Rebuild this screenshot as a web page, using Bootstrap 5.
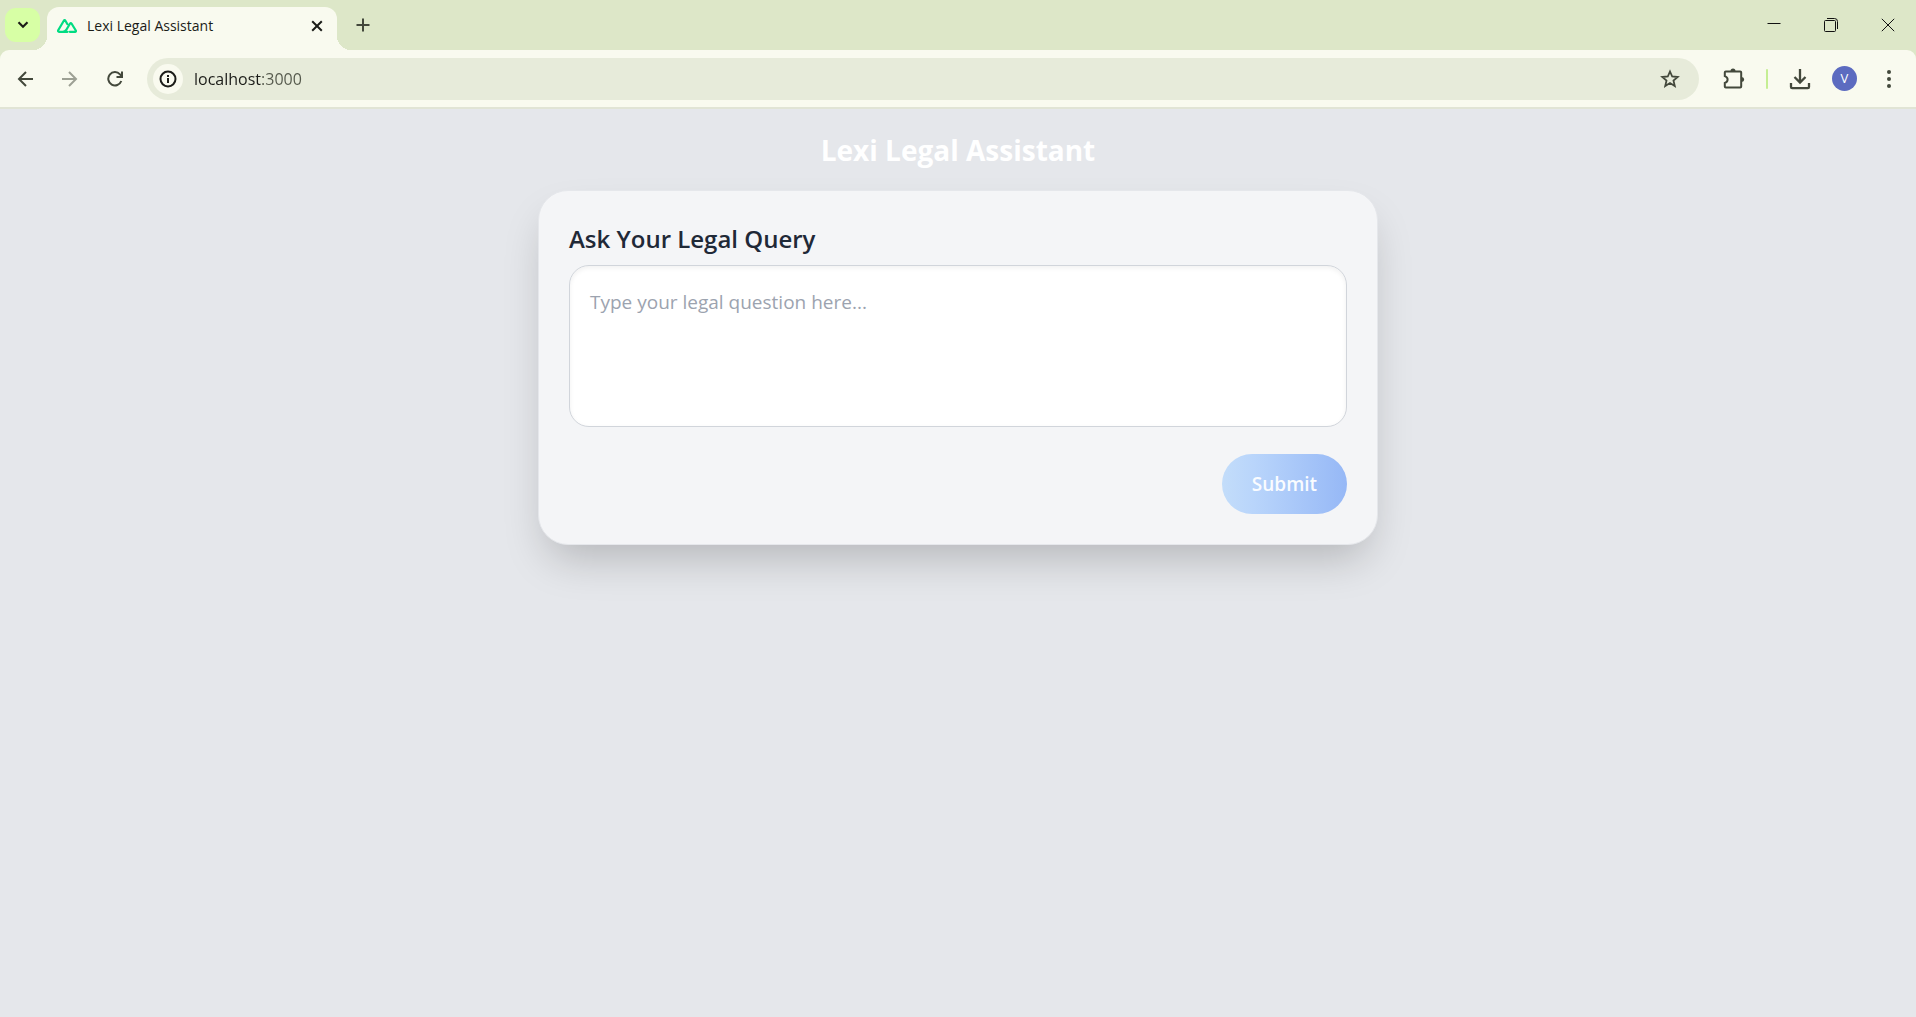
<!DOCTYPE html>
<html lang="en">
<head>
<meta charset="utf-8">
<meta name="viewport" content="width=device-width, initial-scale=1">
<title>Lexi Legal Assistant</title>
<link href="https://cdn.jsdelivr.net/npm/bootstrap@5.3.0/dist/css/bootstrap.min.css" rel="stylesheet">
<style>
  body { font-family: "Open Sans", "Noto Sans", sans-serif; background: #e5e7eb; color: #1f2937; }
  button { color: inherit; }
  .plain-btn { border: 0; background: none; padding: 0; display: flex; align-items: center; justify-content: center; flex: none; }
  svg { display: block; }

  /* tab strip */
  .tab-strip { height: 50px; background: #dde7c8; padding-left: 5px; color: #1b1c18; }
  .tab-search { width: 35px; height: 34px; border-radius: 11px; background: #d7ffa5; margin: 8px 7px 0 0; }
  .site-tab { width: 290px; height: 43px; margin-top: 7px; padding: 0 13px 6px 10px; gap: 10px; background: #f9faef; border-radius: 12px 12px 0 0; position: relative; font-size: 14px; }
  .site-tab::before, .site-tab::after { content: ""; position: absolute; bottom: 0; width: 14px; height: 14px; }
  .site-tab::before { left: -14px; background: radial-gradient(circle at 0 0, transparent 14px, #f9faef 14px); }
  .site-tab::after { right: -14px; background: radial-gradient(circle at 100% 0, transparent 14px, #f9faef 14px); }
  .new-tab { width: 24px; height: 50px; margin-left: 14px; color: #43483b; }
  .win-btn { width: 57px; height: 50px; color: #111; }

  /* toolbar */
  .bar-back { background: #dde7c8; }
  .tool-bar { height: 59px; background: #f9faef; border-radius: 9px 9px 0 0; border-bottom: 2px solid #e1e4d5; padding-left: 10px; color: #43483b; }
  .nav-btn { width: 29px; height: 42px; }
  .address { height: 42px; border-radius: 21px; background: #e7ebda; margin-left: 18px; padding: 0 19px 0 6px; }
  .info-btn { width: 30px; height: 30px; border-radius: 50%; background: #f9faef; color: #1b1c18; }
  .url-input { border: 0; outline: 0; min-width: 0; font-size: 16px; padding: 0 0 0 11px; color: #1b1c18;
    background: linear-gradient(90deg, #1b1c18 79px, #54584b 79px); background-clip: text; -webkit-background-clip: text; -webkit-text-fill-color: transparent; }
  .tool-group { gap: 19px; padding: 0 14px 0 22px; }
  .tool-btn { width: 26px; height: 42px; }
  .tool-rule { width: 2px; height: 20px; border-radius: 1px; background: #c5ee93; }
  .avatar { width: 25px; height: 25px; border-radius: 50%; background: #5c6bc0; color: #fff; font-size: 13px; }

  /* page */
  .app-title { font-size: 28px; line-height: 36px; font-weight: 700; color: #fff; margin: 23px 0 22px; }
  .query-panel { max-width: 840px; background: #f4f5f7; border: 1px solid #e5e7eb; border-radius: 30px; padding: 30px; box-shadow: 0 22px 44px -10px rgba(0,0,0,.22); }
  .query-label { font-size: 24px; line-height: 36px; font-weight: 600; margin-bottom: 8px; }
  .query-input { height: 162px; border: 1px solid #d1d5db; border-radius: 20px; background: #fff; padding: 20px; font-size: 19px; line-height: 32px; resize: none; box-shadow: inset 0 2px 5px rgba(0,0,0,.06); }
  .query-input::placeholder { color: #9ca3af; opacity: 1; }
  .send-btn { height: 60px; width: 125px; border: 0; border-radius: 30px; margin-top: 27px; font-size: 19px; font-weight: 600; color: #fff; background: linear-gradient(90deg, #60a5fa, #2563eb); }
  .send-btn:disabled { color: #fafcff; background: linear-gradient(90deg, #c3ddfa, #b9d5fb 25%, #96b8f6); }
</style>
</head>
<body class="min-vh-100">
<header>
  <div class="tab-strip d-flex align-items-start">
    <button class="plain-btn tab-search" aria-label="Search tabs">
      <svg width="12" height="8" viewBox="0 0 12 8" fill="none" stroke="currentColor" stroke-width="2.2"><path d="M1.5 1.2 6 5.7l4.500-4.500"/></svg>
    </button>
    <div class="site-tab d-flex align-items-center">
      <svg width="20" height="14" viewBox="0 0 20 14" fill="none" stroke="#00dc82" stroke-width="2.200" stroke-linejoin="round" stroke-linecap="round"><path d="M10.500 12.800H2c-.8 0-1.200-.8-.8-1.500L6.800 1.700c.4-.7 1.200-.7 1.600 0L10.300 5M5.500 12.800c2 0 3-.6 4-2.300l3.600-6c.4-.6 1-.6 1.400 0l4.300 7c.4.700 0 1.300-.7 1.300h-5.300"/></svg>
      <span class="flex-grow-1 text-nowrap">Lexi Legal Assistant</span>
      <button class="plain-btn" aria-label="Close tab">
        <svg width="14" height="14" viewBox="0 0 14 14" stroke="currentColor" stroke-width="2"><path d="m2.200 2.200 9.600 9.600m0-9.600-9.600 9.600"/></svg>
      </button>
    </div>
    <button class="plain-btn new-tab" aria-label="New tab">
      <svg width="14" height="14" viewBox="0 0 14 14" stroke="currentColor" stroke-width="2"><path d="M7 .5v13M.5 7h13"/></svg>
    </button>
    <div class="ms-auto d-flex">
      <button class="plain-btn win-btn" aria-label="Minimize"><svg width="14" height="14" viewBox="0 0 14 14" stroke="currentColor"><path d="M.5 5.500h13"/></svg></button>
      <button class="plain-btn win-btn" aria-label="Restore"><svg width="14" height="14" viewBox="0 0 14 14" fill="none" stroke="currentColor"><rect x=".5" y="2.500" width="11" height="11" rx="1"/><path d="M3 .5h7.500q3 0 3 3V11"/></svg></button>
      <button class="plain-btn win-btn" aria-label="Close"><svg width="14" height="14" viewBox="0 0 14 14" stroke="currentColor"><path d="m.8.8 12.400 12.400m0-12.400L.8 13.200"/></svg></button>
    </div>
  </div>
  <div class="bar-back">
    <nav class="tool-bar d-flex align-items-center">
      <button class="plain-btn nav-btn" aria-label="Back"><svg width="16" height="16" viewBox="0 0 16 16" fill="none" stroke="currentColor" stroke-width="2"><path d="M16 8H2m7-7L2 8l7 7"/></svg></button>
      <button class="plain-btn nav-btn ms-3 opacity-50" aria-label="Forward"><svg width="16" height="16" viewBox="0 0 16 16" fill="none" stroke="currentColor" stroke-width="2"><path d="M0 8h14M7 1l7 7-7 7"/></svg></button>
      <button class="plain-btn nav-btn ms-3" aria-label="Reload"><svg width="16" height="16" viewBox="0 0 16 16" fill="none" stroke="currentColor" stroke-width="2"><path d="M14.300 10A6.700 6.700 0 1 1 13 3.300L15 5.500"/><path d="M15 .5v5.500H9.500"/></svg></button>
      <div class="address d-flex align-items-center flex-grow-1">
        <button class="plain-btn info-btn" aria-label="Site information"><svg width="18" height="18" viewBox="0 0 18 18" fill="none" stroke="currentColor" stroke-width="2"><circle cx="9" cy="9" r="7.500"/><path d="M9 8v5M9 5v2"/></svg></button>
        <input class="url-input flex-grow-1" type="text" value="localhost:3000" aria-label="Address">
        <button class="plain-btn" aria-label="Bookmark this page"><svg width="20" height="20" viewBox="0 0 20 20" fill="none" stroke="currentColor" stroke-width="1.800"><path d="m10 2.500 2.200 5 5.500.500-4.200 3.600 1.300 5.400L10 14.100 5.200 17l1.300-5.400L2.300 8l5.500-.500z"/></svg></button>
      </div>
      <div class="tool-group d-flex align-items-center">
        <button class="plain-btn tool-btn" aria-label="Extensions"><svg width="22" height="22" viewBox="0 0 22 22" fill="none" stroke="currentColor" stroke-width="2"><path d="M2.800 3.500h14.400q1 0 1 1v14q0 1-1 1H2.800q-1 0-1-1v-3.600q2.800-.9 2.800-3.400T1.800 8.100V4.500q0-1 1-1z"/><path d="M7.500 3a2.500 2.500 0 0 1 5 0zM18.700 9a2.500 2.500 0 0 1 0 5z" fill="currentColor" stroke="none"/></svg></button>
        <span class="tool-rule"></span>
        <button class="plain-btn tool-btn" aria-label="Downloads"><svg width="22" height="22" viewBox="0 0 22 22" fill="none" stroke="currentColor" stroke-width="2.300"><path d="M11 1v13M5.500 9l5.500 5.500L16.500 9M2 15v4q0 1.200 1.200 1.200h15.600q1.200 0 1.200-1.200v-4"/></svg></button>
        <button class="plain-btn avatar" aria-label="Profile">V</button>
        <button class="plain-btn tool-btn" aria-label="Menu"><svg width="4" height="18" viewBox="0 0 4 18" fill="currentColor"><circle cx="2" cy="2" r="2"/><circle cx="2" cy="9" r="2"/><circle cx="2" cy="16" r="2"/></svg></button>
      </div>
    </nav>
  </div>
</header>
<main class="container-fluid">
  <h1 class="app-title text-center">Lexi Legal Assistant</h1>
  <form class="query-panel mx-auto">
    <label class="query-label d-block" for="query">Ask Your Legal Query</label>
    <textarea class="query-input d-block w-100" id="query" placeholder="Type your legal question here..."></textarea>
    <div class="d-flex justify-content-end">
      <button class="send-btn" type="submit" disabled>Submit</button>
    </div>
  </form>
</main>
<script src="https://cdn.jsdelivr.net/npm/bootstrap@5.3.0/dist/js/bootstrap.bundle.min.js"></script>
</body>
</html>
